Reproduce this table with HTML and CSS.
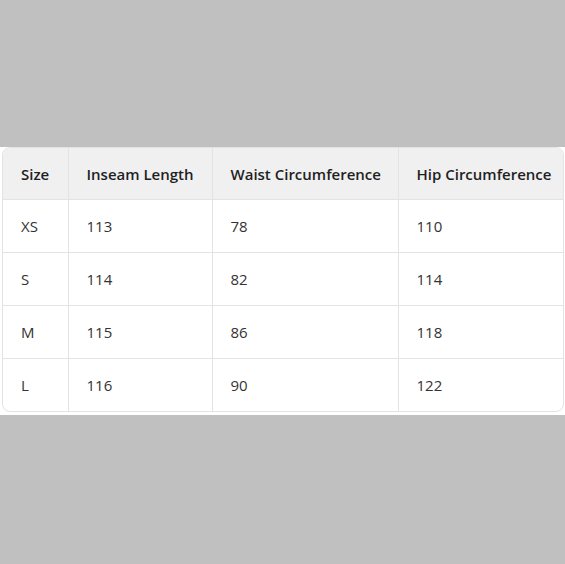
FILE: index.html
```html
<!DOCTYPE html>
<html>
<head>
<meta charset="utf-8">
<link rel="stylesheet" href="styles.css">
</head>
<body>
<div class="band">
  <div class="card">
    <table class="sizes">
      <colgroup>
        <col class="c1"><col class="c2"><col class="c3"><col class="c4">
      </colgroup>
      <thead>
        <tr><th>Size</th><th>Inseam Length</th><th>Waist Circumference</th><th>Hip Circumference</th></tr>
      </thead>
      <tbody>
        <tr><td>XS</td><td>113</td><td>78</td><td>110</td></tr>
        <tr><td>S</td><td>114</td><td>82</td><td>114</td></tr>
        <tr><td>M</td><td>115</td><td>86</td><td>118</td></tr>
        <tr><td>L</td><td>116</td><td>90</td><td>122</td></tr>
      </tbody>
    </table>
  </div>
</div>
</body>
</html>
```
FILE: styles.css
```css
html, body {
  margin: 0;
  padding: 0;
  background: #c0c0c0;
  font-family: "Open Sans", "Noto Sans", sans-serif;
}
.band {
  margin-top: 147px;
  background: #ffffff;
  padding: 0 0 3px 2px;
}
.card {
  width: 562px;
  border: 1px solid #e3e3e3;
  border-radius: 8px;
  overflow: hidden;
  box-sizing: border-box;
}
.sizes {
  width: 100%;
  border-collapse: collapse;
  table-layout: fixed;
}
.c1 { width: 65px; }
.c2 { width: 144px; }
.c3 { width: 186px; }
.sizes th, .sizes td {
  text-align: left;
  padding: 0 18px;
  font-size: 15px;
  white-space: nowrap;
  border-right: 1px solid #e3e3e3;
  border-bottom: 1px solid #e3e3e3;
}
.sizes th:last-child, .sizes td:last-child { border-right: none; }
.sizes tbody tr:last-child td { border-bottom: none; }
.sizes th {
  background: #f0f0f0;
  font-weight: 600;
  color: #1f1f1f;
  height: 51px;
}
.sizes td {
  color: #333333;
  height: 52px;
}
```
